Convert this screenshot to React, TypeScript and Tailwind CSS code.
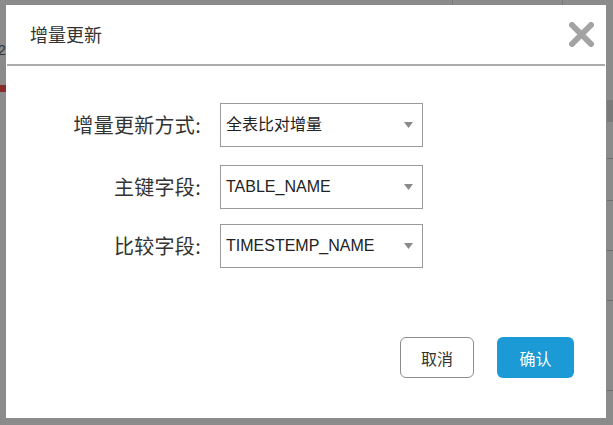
import React from 'react';

const cjk = { fontFamily: '"Noto Sans CJK SC", "Noto Sans", sans-serif' };
const mixed = { fontFamily: '"Liberation Sans", "Noto Sans CJK SC", sans-serif' };

interface FieldRowProps {
  label: string;
  value: string;
  className?: string;
}

function Caret() {
  return (
    <svg width="9" height="6" viewBox="0 0 9 6" className="shrink-0">
      <path d="M0 0 H9 L4.5 6 Z" fill="#8a8a8a" />
    </svg>
  );
}

function FieldRow({ label, value, className = '' }: FieldRowProps) {
  return (
    <div className={`flex items-center ${className}`}>
      <div className="w-[195px] text-right text-[20px] tracking-[0.3px] text-[#333]" style={cjk}>
        {label}
      </div>
      <div className="ml-[19px] flex h-[44px] w-[203px] items-center justify-between border border-[#9a9a9a] bg-white pl-[5px] pr-[9px]">
        <span className="text-[16px] text-[#222]" style={mixed}>
          {value}
        </span>
        <Caret />
      </div>
    </div>
  );
}

export default function App() {
  return (
    <div className="relative h-[425px] w-[613px] overflow-hidden bg-[#8b8b8b]">
      {/* page behind the overlay */}
      <div className="absolute right-0 top-0 flex h-[5px] w-[280px]">
        <div className="w-[120px] border-r border-[#777]" />
        <div className="w-[110px] border-r border-[#777]" />
      </div>
      <div className="absolute left-[-2px] top-[43px] text-[14px] leading-none text-[#333]" style={mixed}>
        2
      </div>
      <div className="absolute left-0 top-[85px] h-[7px] w-[6px] bg-[#8a2b2b]" />
      <div className="absolute right-0 top-[100px] h-[22px] w-[6px] bg-[#7a7a7a]" />
      <div className="absolute right-0 top-[158px] h-px w-[6px] bg-[#6e6e6e]" />
      <div className="absolute right-0 top-[200px] h-px w-[6px] bg-[#6e6e6e]" />
      <div className="absolute right-0 top-[250px] h-px w-[6px] bg-[#6e6e6e]" />
      <div className="absolute right-0 top-[300px] h-px w-[6px] bg-[#6e6e6e]" />
      <div className="absolute right-0 top-[390px] h-px w-[6px] bg-[#6e6e6e]" />

      <div className="absolute left-[6px] top-[5px] flex h-[413px] w-[600px] flex-col bg-white">
        <div className="flex h-[59px] items-center justify-between pl-[24px] pr-[12px]">
          <span className="text-[18px] text-[#333]" style={cjk}>
            增量更新
          </span>
          <svg width="25" height="25" viewBox="0 0 25 25">
            <path d="M3 3 L22 22 M22 3 L3 22" stroke="#a3a3a3" strokeWidth="6" strokeLinecap="round" />
          </svg>
        </div>
        <div className="mx-[1px] h-[2px] bg-[#ababab]" />

        <FieldRow label="增量更新方式:" value="全表比对增量" className="mt-[37px]" />
        <FieldRow label="主键字段:" value="TABLE_NAME" className="mt-[18px]" />
        <FieldRow label="比较字段:" value="TIMESTEMP_NAME" className="mt-[15px]" />

        <div className="mt-[69px] flex justify-end gap-[23px] pr-[32px]">
          <button
            className="h-[41px] w-[74px] rounded-[6px] border border-[#8c8c8c] bg-white text-[16px] text-[#333]"
            style={cjk}
          >
            取消
          </button>
          <button
            className="h-[41px] w-[77px] rounded-[6px] bg-[#1b9ad6] text-[16px] text-white"
            style={cjk}
          >
            确认
          </button>
        </div>
      </div>
    </div>
  );
}
